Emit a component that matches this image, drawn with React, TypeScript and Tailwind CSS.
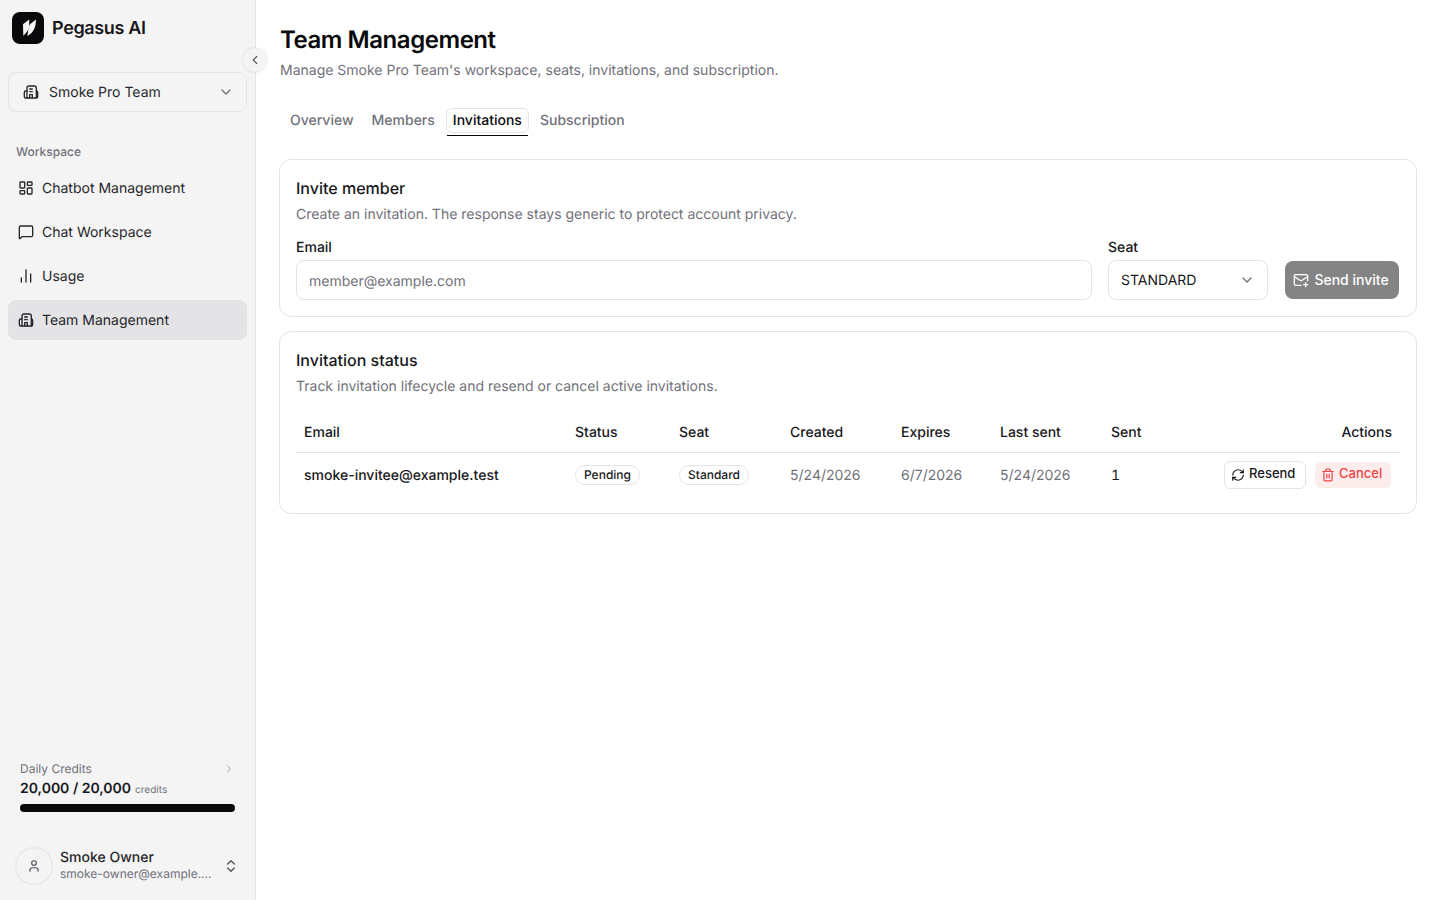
import React from "react";
import { ChevronDown, ChevronLeft, ChevronRight, ChevronsUpDown, LayoutDashboard, MessageSquare, ChartNoAxesColumn, User, MailPlus, RefreshCw, Trash2 } from "lucide-react";

function Building({ className }: { className?: string }) {
  return (
    <svg className={className} viewBox="0 0 24 24" fill="none" stroke="currentColor" strokeWidth="2" strokeLinecap="round" strokeLinejoin="round">
      <path d="M6 21V6a3 3 0 0 1 3-3h8a3 3 0 0 1 3 3v15" />
      <path d="M6 10.5H4a2 2 0 0 0-2 2V19a2 2 0 0 0 2 2h16a2 2 0 0 0 2-2v-6.5a2 2 0 0 0-2-2" />
      <path d="M10 21v-5h4v5" />
      <path d="M10 7.5h4M10 11.5h4" />
    </svg>
  );
}

function Logo() {
  return (
    <div className="w-8 h-8 rounded-lg bg-[#09090b] flex items-center justify-center">
      <svg viewBox="0 0 32 32" className="w-8 h-8" fill="#f4f4f5">
        <path d="M11 12.2L17.2 7.5v8c-1.300 3.500-3.400 6-5.900 8.300z" />
        <path d="M18 12.2L24 7.500c0 7-2 13-8.600 16.500.4-4 1-8.800 2.600-11.800z" />
      </svg>
    </div>
  );
}

function NavItem({ icon, label, active }: { icon: React.ReactNode; label: string; active?: boolean }) {
  return (
    <div className={`h-10 rounded-lg flex items-center gap-2 px-2.5 text-sm text-[#27272a] ${active ? "bg-[#e4e4e7]" : ""}`}>
      {icon}
      <span className="pt-[2px]">{label}</span>
    </div>
  );
}

const th = "h-[39px] px-2 pt-[2px] text-left text-sm font-medium text-[#18181b] align-middle";
const td = "h-[45px] px-2 text-sm align-middle";
const tdText = "h-[45px] px-2 pt-[2px] text-sm align-middle";

function Badge({ children }: { children: React.ReactNode }) {
  return <span className="inline-flex items-center h-5 px-2 rounded-full border border-[#e4e4e7] text-xs font-medium text-[#18181b]">{children}</span>;
}

function Tab({ children }: { children: React.ReactNode }) {
  return <div className="h-7 px-[7px] flex items-center text-sm font-medium text-[#71717a]">{children}</div>;
}

export default function App() {
  return (
    <div className="flex h-[900px] w-[1440px] overflow-hidden bg-white text-[#09090b] font-['Inter',sans-serif] antialiased [text-rendering:geometricPrecision]">
      <aside className="relative w-[256px] shrink-0 h-full bg-[#f4f4f5] border-r border-[#e4e4e7] flex flex-col">
        <div className="flex items-center gap-2 px-3 pt-3 h-[44px]">
          <Logo />
          <span className="pt-[2px] text-lg font-semibold tracking-[-0.35px] text-[#18181b]">Pegasus AI</span>
        </div>
        <button className="absolute right-[-12px] top-[48px] w-6 h-6 rounded-full bg-[#f4f4f5] shadow-[0_0_2px_rgba(0,0,0,0.18)] flex items-center justify-center text-[#52525b]">
          <ChevronLeft className="w-3.5 h-3.5" />
        </button>
        <div className="px-2 mt-[28px]">
          <div className="h-10 rounded-lg border border-[#e4e4e7] flex items-center pl-[14px] pr-3 text-sm text-[#27272a]">
            <Building className="w-4 h-4 mr-[10px]" />
            <span className="flex-1 pt-[2px]">Smoke Pro Team</span>
            <ChevronDown className="w-4 h-4 text-[#71717a]" />
          </div>
        </div>
        <div className="px-2 mt-[32px] flex flex-col">
          <div className="px-2 text-xs font-medium text-[#71717a] h-4 leading-4 mb-2">Workspace</div>
          <NavItem icon={<LayoutDashboard className="w-4 h-4" />} label="Chatbot Management" />
          <div className="h-1" />
          <NavItem icon={<MessageSquare className="w-4 h-4" />} label="Chat Workspace" />
          <div className="h-1" />
          <NavItem icon={<ChartNoAxesColumn className="w-4 h-4" />} label="Usage" />
          <div className="h-1" />
          <NavItem icon={<Building className="w-4 h-4" />} label="Team Management" active />
        </div>
        <div className="mt-auto px-5">
          <div className="flex items-center justify-between h-4">
            <span className="text-xs text-[#71717a]">Daily Credits</span>
            <ChevronRight className="w-3 h-3 text-[#a1a1aa]" />
          </div>
          <div className="flex items-baseline gap-1 mt-[2px] h-5">
            <span className="text-sm font-semibold text-[#18181b]">20,000 / 20,000</span>
            <span className="text-[10px] text-[#71717a]">credits</span>
          </div>
          <div className="h-2 rounded-full bg-[#09090b] mt-[5px]" />
        </div>
        <div className="flex items-center px-4 mt-[36px] mb-4">
          <div className="w-9 h-9 rounded-full bg-[#f4f4f5] shadow-[0_0_2px_rgba(0,0,0,0.2)] flex items-center justify-center text-[#52525b]">
            <User className="w-3.5 h-3.5" />
          </div>
          <div className="ml-2 w-[154px]">
            <div className="text-sm font-medium leading-4 text-[#27272a]">Smoke Owner</div>
            <div className="text-xs leading-4 text-[#71717a]">smoke-owner@example....</div>
          </div>
          <ChevronsUpDown className="w-4 h-4 ml-[9px] text-[#52525b]" />
        </div>
      </aside>
      <main className="flex-1 min-w-0 pl-[24px] pr-[23px] pt-[24px]">
        <h1 className="text-2xl font-semibold tracking-[-0.45px] leading-8 text-[#09090b]">Team Management</h1>
        <p className="text-sm text-[#71717a] mt-[5px] leading-5">Manage Smoke Pro Team's workspace, seats, invitations, and subscription.</p>
        <div className="flex items-center gap-1 ml-[3px] mt-[26px] h-7">
          <Tab>Overview</Tab>
          <Tab>Members</Tab>
          <div className="relative h-[25px] -mt-px px-[6px] flex items-center text-sm font-medium text-[#09090b] border border-[#e4e4e7] rounded-md">
            Invitations
            <span className="absolute left-0 right-0 bottom-[-4px] h-px bg-[#09090b]" />
          </div>
          <Tab>Subscription</Tab>
        </div>
        <section className="-ml-px mt-[24px] rounded-xl border border-[#e4e4e7] h-[158px] px-4 pt-4">
          <h2 className="text-base font-medium leading-6 text-[#18181b]">Invite member</h2>
          <p className="text-sm leading-5 text-[#71717a] mt-[5px]">Create an invitation. The response stays generic to protect account privacy.</p>
          <div className="flex items-end mt-[13px]">
            <div className="w-[796px]">
              <label className="block text-sm font-medium leading-5 mb-[2px] text-[#18181b]">Email</label>
              <div className="h-10 rounded-lg border border-[#e4e4e7] flex items-center px-3 pt-[4px] text-sm text-[#71717a]">member@example.com</div>
            </div>
            <div className="w-[160px] ml-4">
              <label className="block text-sm font-medium leading-5 mb-[2px] text-[#18181b]">Seat</label>
              <div className="h-10 rounded-lg border border-[#e4e4e7] flex items-center justify-between px-3 text-sm text-[#18181b]">
                <span className="pt-[2px]">STANDARD</span>
                <ChevronDown className="w-4 h-4 text-[#71717a]" />
              </div>
            </div>
            <button className="ml-[17px] w-[114px] h-[38px] mb-[1px] pr-[2px] rounded-lg bg-[#848484] text-white text-sm font-medium flex items-center justify-center gap-[5px]">
              <MailPlus className="w-4 h-4" />
              Send invite
            </button>
          </div>
        </section>
        <section className="-ml-px mt-[14px] rounded-xl border border-[#e4e4e7] h-[183px] px-4 pt-4">
          <h2 className="text-base font-medium leading-6 text-[#18181b]">Invitation status</h2>
          <p className="text-sm leading-5 text-[#71717a] mt-[5px]">Track invitation lifecycle and resend or cancel active invitations.</p>
          <table className="w-full mt-4 border-collapse table-fixed">
            <colgroup>
              <col className="w-[271px]" />
              <col className="w-[104px]" />
              <col className="w-[111px]" />
              <col className="w-[111px]" />
              <col className="w-[99px]" />
              <col className="w-[111px]" />
              <col className="w-[64px]" />
              <col />
            </colgroup>
            <thead>
              <tr className="border-b border-[#e4e4e7]">
                <th className={th}>Email</th>
                <th className={th}>Status</th>
                <th className={th}>Seat</th>
                <th className={th}>Created</th>
                <th className={th}>Expires</th>
                <th className={th}>Last sent</th>
                <th className={th}>Sent</th>
                <th className={`${th} text-right`}>Actions</th>
              </tr>
            </thead>
            <tbody>
              <tr>
                <td className={`${tdText} font-medium text-[#18181b]`}>smoke-invitee@example.test</td>
                <td className={td}><Badge>Pending</Badge></td>
                <td className={td}><Badge>Standard</Badge></td>
                <td className={`${tdText} text-[#71717a]`}>5/24/2026</td>
                <td className={`${tdText} text-[#71717a]`}>6/7/2026</td>
                <td className={`${tdText} text-[#71717a]`}>5/24/2026</td>
                <td className={`${tdText} text-[#18181b] tabular-nums`}>1</td>
                <td className="h-[45px] pr-[9px] align-middle">
                  <div className="flex items-center justify-end gap-[9px]">
                    <button className="h-7 w-[82px] pl-[6px] rounded-md border border-[#e4e4e7] flex items-center gap-[4px] text-[13px] font-medium text-[#18181b]">
                      <RefreshCw className="w-3.5 h-3.5" /><span className="-mt-0.5">Resend</span>
                    </button>
                    <button className="h-[26px] w-[76px] pl-[6px] rounded-md bg-[#fdecec] flex items-center gap-[4px] text-[13px] font-medium text-[#ef4444]">
                      <Trash2 className="w-3.5 h-3.5" /><span className="-mt-0.5">Cancel</span>
                    </button>
                  </div>
                </td>
              </tr>
            </tbody>
          </table>
        </section>
      </main>
    </div>
  );
}
